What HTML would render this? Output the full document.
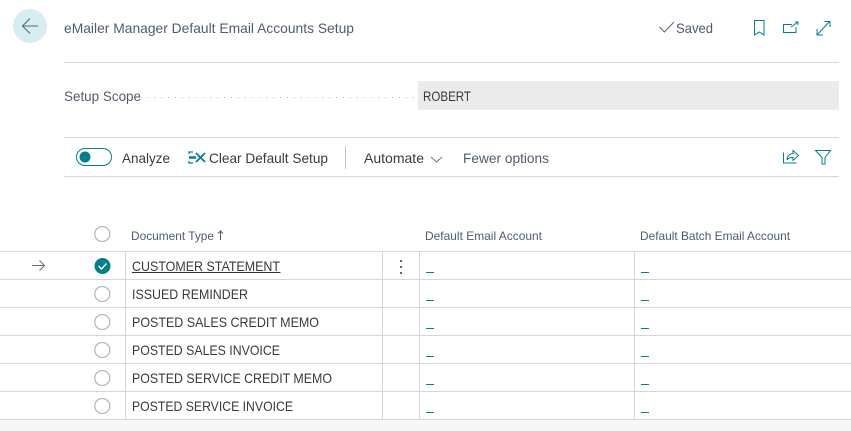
<!DOCTYPE html>
<html><head><meta charset="utf-8"><style>
html,body{margin:0;padding:0;background:#fff;width:851px;height:431px;overflow:hidden}
svg{display:block}
text{font-family:"Liberation Sans",sans-serif;font-size:14px;fill:#3a3a3a}
.m{fill:#505c6d}
.h{font-size:12px;fill:#505c6d}
.l{stroke:#d5d6da;stroke-width:1;fill:none}
.t{stroke:#00808a;stroke-width:1;fill:none}
</style></head><body>
<svg width="851" height="431" viewBox="0 0 851 431" xmlns="http://www.w3.org/2000/svg">
<rect width="851" height="431" fill="#fff"/>
<circle cx="30" cy="26" r="17" fill="#d6eef1"/>
<path d="M22.500 26H38M30 18.500l-7.500 7.500 7.500 7.500" fill="none" stroke="#5f6670" stroke-width="1.100"/>
<text x="64" y="33" class="m" textLength="290" lengthAdjust="spacingAndGlyphs">eMailer Manager Default Email Accounts Setup</text>
<path d="M659.500 27l5 5 9.500-10" fill="none" stroke="#5f6a78" stroke-width="1"/>
<text x="676" y="33" class="m" textLength="37" lengthAdjust="spacingAndGlyphs">Saved</text>
<path class="t" d="M754.500 35V20.500h9.500V35l-4.750-3z"/>
<path class="t" d="M792 24.500h-8.500v8h12.500v-5.500M791 27l7-5M795 22h3v3"/>
<path class="t" d="M817 35l13-14M817 29v6h6M824.500 21.500h5.500v5.500"/>
<path class="l" d="M64 62.500H839M64 137.500H839M64 176.500H839"/>
<text x="64" y="101" class="m" textLength="77" lengthAdjust="spacingAndGlyphs">Setup Scope</text>
<path d="M147 97.500H414" stroke="#b4b7bc" stroke-width="1" stroke-dasharray="1 6"/>
<rect x="418" y="81" width="421" height="29" fill="#eaebed"/>
<text x="423" y="101" textLength="48" lengthAdjust="spacingAndGlyphs">ROBERT</text>
<rect x="76.500" y="148.500" width="35" height="17" rx="8.500" fill="#fff" stroke="#00808a"/>
<circle cx="85" cy="157" r="5.500" fill="#00808a"/>
<text x="122" y="163" textLength="48" lengthAdjust="spacingAndGlyphs">Analyze</text>
<path d="M189 154v-2h4M189 161v2h4" fill="none" stroke="#00808a" stroke-width="1.200"/>
<path d="M189 157.500h7" stroke="#00808a" stroke-width="2.500"/>
<path d="M196 153l9 9M205 153l-9 9" stroke="#00808a" stroke-width="1.800"/>
<text x="209" y="163" textLength="119" lengthAdjust="spacingAndGlyphs">Clear Default Setup</text>
<path d="M345.500 146V169" stroke="#c0c3c8"/>
<text x="364" y="163" textLength="60" lengthAdjust="spacingAndGlyphs">Automate</text>
<path d="M431 157l5.500 5 5.500-5" fill="none" stroke="#6b7280"/>
<text x="463" y="163" class="m" textLength="86" lengthAdjust="spacingAndGlyphs">Fewer options</text>
<path class="t" d="M783.500 152.500v10.500h13M787 160c0-4 3-6.500 6-6.500V150.500l5.500 5-5.500 5v-3c-2.500 0-5 .5-6 2.500z"/>
<path class="t" d="M815.500 150.500h15l-5.500 7v6.500h-3v-6.500z"/>
<circle cx="102.300" cy="234" r="7.500" fill="#fff" stroke="#b4b7bd" stroke-width="1.300"/>
<text x="131" y="240" class="h" textLength="83" lengthAdjust="spacingAndGlyphs">Document Type</text>
<path d="M220.500 240V231M218 233.500l2.500-2.500 2.500 2.500" fill="none" stroke="#505c6d"/>
<text x="425" y="240" class="h" textLength="117" lengthAdjust="spacingAndGlyphs">Default Email Account</text>
<text x="640" y="240" class="h" textLength="150" lengthAdjust="spacingAndGlyphs">Default Batch Email Account</text>
<rect x="0" y="420" width="851" height="11" fill="#f5f6f8"/>
<path class="l" d="M0 251.500H851M0 279.500H851M0 307.500H851M0 335.500H851M0 363.500H851M0 391.500H851M0 419.500H851"/>
<path class="l" d="M125.500 251V419M382.500 251V419M419.500 251V419M634.500 251V419"/>
<path d="M32 265.500H44.500M39.500 260.500l5 5-5 5" fill="none" stroke="#6b7078"/>
<circle cx="102.500" cy="266" r="8" fill="#00808a"/>
<path d="M98.500 266l3 3 5-5.500" fill="none" stroke="#fff" stroke-width="1.400"/>
<g fill="#fff" stroke="#b4b7bd" stroke-width="1.300">
<circle cx="102.300" cy="294" r="7.500"/><circle cx="102.300" cy="322" r="7.500"/><circle cx="102.300" cy="350" r="7.500"/><circle cx="102.300" cy="378" r="7.500"/><circle cx="102.300" cy="406" r="7.500"/>
</g>
<text x="132" y="271" textLength="148" lengthAdjust="spacingAndGlyphs">CUSTOMER STATEMENT</text>
<path d="M132 272.500H280.500" stroke="#333"/>
<text x="132" y="299" textLength="116" lengthAdjust="spacingAndGlyphs">ISSUED REMINDER</text>
<text x="132" y="327" textLength="187" lengthAdjust="spacingAndGlyphs">POSTED SALES CREDIT MEMO</text>
<text x="132" y="355" textLength="148" lengthAdjust="spacingAndGlyphs">POSTED SALES INVOICE</text>
<text x="132" y="383" textLength="200" lengthAdjust="spacingAndGlyphs">POSTED SERVICE CREDIT MEMO</text>
<text x="132" y="411" textLength="161" lengthAdjust="spacingAndGlyphs">POSTED SERVICE INVOICE</text>
<g fill="#5f6670"><rect x="400" y="260" width="2" height="2"/><rect x="400" y="266" width="2" height="2"/><rect x="400" y="272" width="2" height="2"/></g>
<path stroke="#00808a" d="M426 272.500h8M641 272.500h8M426 300.500h8M641 300.500h8M426 328.500h8M641 328.500h8M426 356.500h8M641 356.500h8M426 384.500h8M641 384.500h8M426 412.500h8M641 412.500h8"/>
</svg>
</body></html>
